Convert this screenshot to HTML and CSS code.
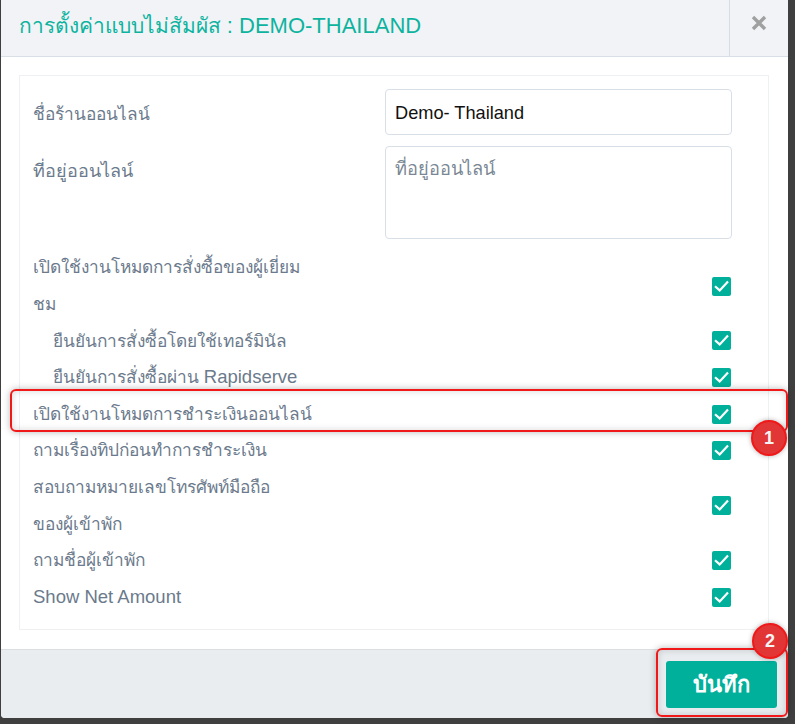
FILE: index.html
```html
<!DOCTYPE html>
<html lang="th">
<head>
<meta charset="utf-8">
<title>การตั้งค่าแบบไม่สัมผัส</title>
<link rel="stylesheet" href="styles.css">
</head>
<body>
<div class="modal">
  <header class="modal-header">
    <h1 class="modal-title">การตั้งค่าแบบไม่สัมผัส <span class="title-latin">: DEMO-THAILAND</span></h1>
    <button class="close" type="button" aria-label="close">
      <svg viewBox="0 0 16 16" width="16" height="16"><path d="M2 2 14 14M14 2 2 14" /></svg>
    </button>
  </header>
  <main class="modal-body">
    <section class="panel">
      <div class="field">
        <label class="field-label">ชื่อร้านออนไลน์</label>
        <input class="input" type="text" value="Demo- Thailand">
      </div>
      <div class="field">
        <label class="field-label field-label-wide">ที่อยู่ออนไลน์</label>
        <textarea class="input area" placeholder="ที่อยู่ออนไลน์"></textarea>
      </div>
      <div class="check-row tall"><span class="row-label">เปิดใช้งานโหมดการสั่งซื้อของผู้เยี่ยม<br>ชม</span><span class="check"><svg viewBox="0 0 19 19"><path d="M3 9.2 7.7 13.4 16 4.6"/></svg></span></div>
      <div class="check-row"><span class="row-label sub">ยืนยันการสั่งซื้อโดยใช้เทอร์มินัล</span><span class="check"><svg viewBox="0 0 19 19"><path d="M3 9.2 7.7 13.4 16 4.6"/></svg></span></div>
      <div class="check-row"><span class="row-label sub">ยืนยันการสั่งซื้อผ่าน <span class="latin">Rapidserve</span></span><span class="check"><svg viewBox="0 0 19 19"><path d="M3 9.2 7.7 13.4 16 4.6"/></svg></span></div>
      <div class="check-row"><span class="row-label">เปิดใช้งานโหมดการชำระเงินออนไลน์</span><span class="check"><svg viewBox="0 0 19 19"><path d="M3 9.2 7.7 13.4 16 4.6"/></svg></span></div>
      <div class="check-row"><span class="row-label">ถามเรื่องทิปก่อนทำการชำระเงิน</span><span class="check"><svg viewBox="0 0 19 19"><path d="M3 9.2 7.7 13.4 16 4.6"/></svg></span></div>
      <div class="check-row tall"><span class="row-label">สอบถามหมายเลขโทรศัพท์มือถือ<br>ของผู้เข้าพัก</span><span class="check"><svg viewBox="0 0 19 19"><path d="M3 9.2 7.7 13.4 16 4.6"/></svg></span></div>
      <div class="check-row"><span class="row-label">ถามชื่อผู้เข้าพัก</span><span class="check"><svg viewBox="0 0 19 19"><path d="M3 9.2 7.7 13.4 16 4.6"/></svg></span></div>
      <div class="check-row"><span class="row-label latin">Show Net Amount</span><span class="check"><svg viewBox="0 0 19 19"><path d="M3 9.2 7.7 13.4 16 4.6"/></svg></span></div>
    </section>
  </main>
  <footer class="modal-footer">
    <button class="save" type="button">บันทึก</button>
  </footer>
</div>
<div class="mark mark-row"></div>
<div class="badge badge-one">1</div>
<div class="mark mark-save"></div>
<div class="badge badge-two">2</div>
</body>
</html>
```
FILE: styles.css
```css
* { box-sizing: border-box; }
html, body { margin: 0; height: 100%; }
body {
  position: relative;
  width: 795px;
  height: 724px;
  overflow: hidden;
  background: #3f3f3f;
  font-family: "Liberation Sans", "Noto Sans", sans-serif;
  color: #6b7a8c;
  font-size: 17.3px;
}
.modal {
  margin-left: 1px;
  width: 787px;
  height: 718px;
  background: #fff;
  border-radius: 0 0 4px 4px;
  display: flex;
  flex-direction: column;
  overflow: hidden;
}
.modal-header {
  height: 57px;
  flex: none;
  display: flex;
  background: #f1f3f7;
  border-bottom: 1px solid #d8dfe6;
}
.modal-title {
  flex: 1;
  margin: 0;
  padding: 13px 0 0 18px;
  font-size: 20.9px;
  line-height: 26px;
  font-weight: 400;
  color: #0db39e;
}
.title-latin { font-size: 22px; }
.close {
  width: 59px;
  padding: 0 0 0 1px;
  background: transparent;
  border: 0;
  border-left: 1px solid #d8dce2;
  display: flex;
  align-items: center;
  justify-content: center;
}
.close svg { fill: none; stroke: #a0a0a0; stroke-width: 3.4; margin-bottom: 10px; margin-right: 2px; }
.modal-body { flex: 1; padding: 18px 19px 19px 18px; }
.panel {
  height: 555px;
  border: 1px solid #eef0f2;
  padding: 13px 37px 0 13px;
}
.field {
  display: grid;
  grid-template-columns: 352px 347px;
  margin-bottom: 11px;
}
.field + .check-row { margin-top: -0.6px; }
.field-label { padding-top: 15px; line-height: 20px; }
.field-label-wide { font-size: 18px; }
.input {
  display: block;
  width: 347px;
  height: 46px;
  border: 1px solid #d8dfe6;
  border-radius: 4px;
  padding: 2px 9px 0;
  color: #111;
  background: #fff;
  font: inherit;
  font-size: 18.2px;
}
.area {
  height: 93px;
  padding-top: 7px;
  resize: none;
}
.area::placeholder { color: #7a8794; opacity: 1; }
.check-row {
  display: flex;
  align-items: center;
  justify-content: space-between;
  min-height: 36.6px;
}
.row-label { display: block; width: 300px; line-height: 36.6px; }
.sub { padding-left: 20px; }
.latin { font-size: 18.5px; }
.check {
  flex: none;
  width: 19px;
  height: 19px;
  border-radius: 2px;
  background: #00b09b;
}
.check svg { display: block; width: 19px; height: 19px; fill: none; stroke: #fff; stroke-width: 2.2; }
.modal-footer {
  height: 69px;
  flex: none;
  background: #e9edf0;
  border-top: 1px solid #dcdfe2;
  display: flex;
  justify-content: flex-end;
  padding: 11px 11px 0 0;
}
.save {
  width: 111px;
  height: 47px;
  border: 0;
  border-radius: 3px;
  background: #00b09b;
  color: #fff;
  font-family: inherit;
  font-size: 22px;
  font-weight: 700;
}
.mark {
  position: absolute;
  border: 2px solid #f01818;
  border-radius: 6px;
  box-shadow: 0 0 7px rgba(0,0,0,.28), inset 0 0 7px rgba(0,0,0,.16);
}
.mark-row { left: 10px; top: 389px; width: 778px; height: 43px; }
.mark-save { left: 656px; top: 648px; width: 132px; height: 69px; }
.badge {
  position: absolute;
  width: 36px;
  height: 36px;
  border: 2px solid #f01818;
  border-radius: 50%;
  background: #e23636;
  color: #f4f4f4;
  font-size: 18px;
  font-weight: 700;
  line-height: 32px;
  text-align: center;
  box-shadow: 0 0 5px rgba(0,0,0,.3);
}
.badge-one { left: 751px; top: 420px; }
.badge-two { left: 752px; top: 623px; }
```
